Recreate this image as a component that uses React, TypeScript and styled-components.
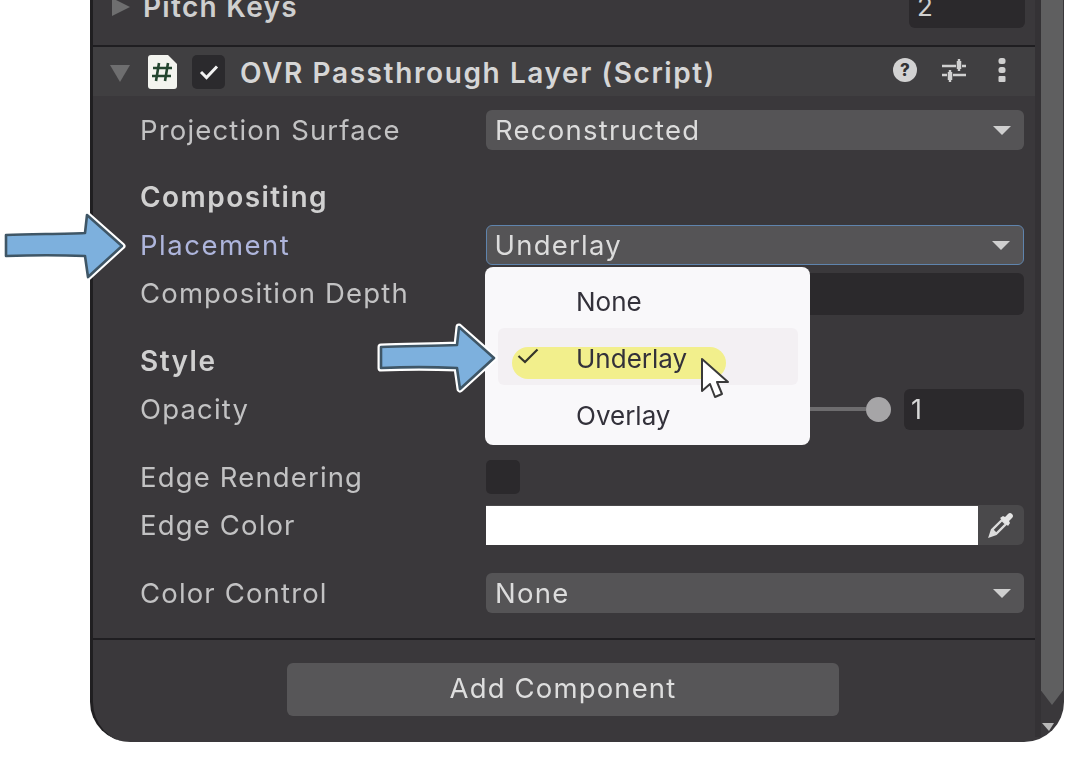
import React from 'react'
import styled, { createGlobalStyle } from 'styled-components'

const GlobalStyle = createGlobalStyle`
  html, body {
    margin: 0;
    height: 100%;
    background: #fff;
    overflow: hidden;
  }
  body {
    font-family: Inter, "Liberation Sans", sans-serif;
  }
`

const Panel = styled.div`
  position: relative;
  display: flex;
  box-sizing: border-box;
  width: 974px;
  height: 762px;
  margin: -20px 0 0 90px;
  background: #3a383b;
  border-left: 3px solid #201f21;
  border-radius: 0 0 40px 40px;
  filter: blur(0.4px);
`

const Content = styled.div`
  flex: 1;
  display: flex;
  flex-direction: column;
  min-width: 0;
`

const Scrollbar = styled.div`
  position: relative;
  align-self: flex-start;
  width: 29px;
  height: 757px;
  display: flex;
  border-left: 6px solid #343235;
  box-sizing: border-box;
`

const Thumb = styled.div`
  width: 22px;
  height: 725px;
  background: #5f5f60;
  clip-path: polygon(0 0, 100% 0, 100% 98%, 50% 100%, 0 98%);
`

const ScrollArrow = styled.div`
  position: absolute;
  left: 1px;
  top: 743px;
  width: 0;
  height: 0;
  border-left: 7px solid transparent;
  border-right: 5px solid transparent;
  border-top: 8px solid #b9b9b9;
`

const TopRow = styled.div`
  display: flex;
  align-items: center;
  height: 54px;
  padding: 0 10px 0 19px;
  margin-bottom: 11px;
`

const Caret = styled.div<{ $open?: boolean }>`
  width: 0;
  height: 0;
  ${(p) =>
    p.$open
      ? `margin-top: 3px;
         border-left: 10px solid transparent;
         border-right: 10px solid transparent;
         border-top: 17px solid #6e6e6f;`
      : `border-top: 9px solid transparent;
         border-bottom: 9px solid transparent;
         border-left: 18px solid #6e6e6f;`}
`

const PitchLabel = styled.span`
  margin-left: 13px;
  flex: 1;
  font-size: 28px;
  font-weight: 600;
  letter-spacing: 1.3px;
  color: #cfcfcf;
`

const PitchInput = styled.div`
  width: 116px;
  height: 42px;
  margin-top: -1px;
  box-sizing: border-box;
  padding-left: 8px;
  line-height: 42px;
  background: #2b292c;
  border-radius: 6px;
  font-size: 26px;
  color: #d0d0d0;
`

const Divider = styled.div`
  height: 2px;
  background: #1f1e21;
`

const Header = styled.div`
  display: flex;
  align-items: center;
  height: 49px;
  padding-left: 17px;
  background: #403f41;
`

const FileIcon = styled.svg`
  width: 30px;
  height: 36px;
  margin-left: 18px;
`

const Toggle = styled.div`
  display: flex;
  align-items: center;
  justify-content: center;
  width: 33px;
  height: 34px;
  margin-left: 14px;
  background: #2b2a2d;
  border-radius: 5px;
`

const HeaderTitle = styled.span`
  flex: 1;
  margin: 2px 0 0 15px;
  font-size: 28px;
  font-weight: 600;
  letter-spacing: 1.6px;
  color: #d6d6d6;
`

const HeaderIcons = styled.div`
  display: flex;
  align-items: center;
  gap: 24px;
  padding-right: 28px;
  margin-top: -4px;
`

const DotsIcon = styled.svg`
  margin-left: 6px;
`

const Body = styled.div`
  display: flex;
  flex-direction: column;
  gap: 28px;
  padding: 14px 11px 25px 47px;
`

const Group = styled.div<{ $nudge?: boolean }>`
  display: flex;
  flex-direction: column;
  gap: 8px;
  margin-top: ${(p) => (p.$nudge ? '1px' : '0')};
`

const Row = styled.div`
  display: grid;
  grid-template-columns: 346px 1fr;
  grid-template-rows: 40px;
  align-items: center;
  height: 40px;
`

const Label = styled.span<{ $focus?: boolean }>`
  font-size: 27.5px;
  letter-spacing: ${(p) => (p.$focus ? '1.5px' : '1.15px')};
  color: ${(p) => (p.$focus ? '#aeb5dc' : '#c2c2c3')};
`

const Heading = styled.div`
  height: 39px;
  line-height: 39px;
  font-size: 28px;
  font-weight: 600;
  letter-spacing: 1.45px;
  color: #d0d0d0;
`

const Select = styled.div<{ $focus?: boolean }>`
  display: flex;
  align-items: center;
  justify-content: space-between;
  box-sizing: border-box;
  height: 40px;
  padding: 0 13px 0 ${(p) => (p.$focus ? '7.5px' : '9px')};
  background: #555456;
  border-radius: 6px;
  border: ${(p) => (p.$focus ? '1.5px solid #5f84ad' : 'none')};
  font-size: 27.5px;
  letter-spacing: 1.25px;
  color: #dcdcdc;
`

const SelectCaret = styled.div`
  width: 0;
  height: 0;
  border-left: 9px solid transparent;
  border-right: 9px solid transparent;
  border-top: 9px solid #cfcfcf;
`

const DarkField = styled.div`
  align-self: start;
  height: 42px;
  background: #2b292c;
  border-radius: 6px;
`

const SliderControl = styled.div`
  display: flex;
  align-items: center;
`

const Track = styled.div`
  flex: 1;
  height: 4px;
  background: #6d6c6e;
`

const Knob = styled.div`
  width: 25px;
  height: 25px;
  border-radius: 50%;
  background: #a6a5a7;
  margin-right: 13px;
`

const NumberField = styled.div`
  width: 120px;
  height: 41px;
  box-sizing: border-box;
  padding-left: 7px;
  line-height: 41px;
  background: #2b292c;
  border-radius: 6px;
  font-size: 27px;
  color: #d8d8d8;
`

const CheckBox = styled.div`
  width: 34px;
  height: 34px;
  background: #2b292c;
  border-radius: 5px;
`

const ColorControl = styled.div`
  display: flex;
  align-items: flex-end;
  height: 40px;
  background: #4a494b;
  border-radius: 0 6px 6px 0;
`

const Swatch = styled.div`
  flex: 1;
  height: 39px;
  background: #fff;
`

const Picker = styled.div`
  display: flex;
  align-self: stretch;
  align-items: center;
  justify-content: center;
  width: 46px;
`

const Footer = styled.div`
  flex: 1;
  display: flex;
  justify-content: center;
  padding: 23px 2px 0 0;
`

const AddButton = styled.div`
  display: flex;
  align-items: center;
  justify-content: center;
  box-sizing: border-box;
  width: 552px;
  height: 53px;
  padding-bottom: 3px;
  background: #575658;
  border-radius: 6px;
  font-size: 27.5px;
  letter-spacing: 1.15px;
  color: #dedede;
`

const Menu = styled.div`
  position: absolute;
  left: 392px;
  top: 287px;
  width: 325px;
  height: 178px;
  box-sizing: border-box;
  padding-top: 6px;
  background: #f9f8fa;
  border-radius: 8px;
`

const MenuItem = styled.div<{ $active?: boolean }>`
  position: relative;
  display: flex;
  align-items: center;
  box-sizing: border-box;
  height: 57px;
  margin: ${(p) => (p.$active ? '-2px 12px 2px 13px' : '0 12px 0 13px')};
  padding: ${(p) => (p.$active ? '4px 0 0 78px' : '0 0 0 78px')};
  border-radius: 6px;
  background: ${(p) => (p.$active ? '#f3f0f3' : 'transparent')};
  font-size: 26px;
  color: #33313a;
`

const Highlight = styled.div`
  position: absolute;
  left: 14px;
  top: 19px;
  width: 214px;
  height: 32px;
  border-radius: 16px;
  background: #f2ef8c;
`

const MenuText = styled.span`
  position: relative;
`

const MenuCheck = styled.svg`
  position: absolute;
  left: 19px;
  top: 20px;
  width: 22px;
  height: 16px;
`

const MenuCursor = styled.svg`
  position: absolute;
  left: 202px;
  top: 29px;
  width: 30px;
  height: 44px;
`

const Callout = styled.svg<{ $x: number; $y: number }>`
  position: absolute;
  left: ${(p) => p.$x}px;
  top: ${(p) => p.$y}px;
  width: 126px;
  height: 76px;
  overflow: visible;
`

const BlueArrow = ({ x, y, tail }: { x: number; y: number; tail: number }) => {
  const d = `M${tail} 25 C30 24 60 24 83 23 L85 5 L120 36 L86 67 L83 46 C60 45 30 45 ${tail} 46 Z`
  return (
    <Callout $x={x} $y={y} viewBox="0 0 126 76">
      <path d={d} fill="none" stroke="#fff" strokeWidth="7" strokeLinejoin="round" />
      <path d={d} fill="#7db0dd" stroke="#3f5666" strokeWidth="2.6" strokeLinejoin="round" />
    </Callout>
  )
}

const Sliders = () => (
  <svg width="26" height="26" viewBox="0 0 26 26" fill="none" stroke="#d0d0d0" strokeWidth="2.4">
    <path d="M1 9h14M21 9h4M18 2v12" />
    <path d="M1 18h5M12 18h13M9 13v12" strokeWidth="2.4" />
    <path d="M18 4v8M9 15v8" strokeWidth="4.5" />
  </svg>
)

export default function App() {
  return (
    <>
      <GlobalStyle />
      <Panel>
        <Content>
          <TopRow>
            <Caret />
            <PitchLabel>Pitch Keys</PitchLabel>
            <PitchInput>2</PitchInput>
          </TopRow>
          <Divider />
          <Header>
            <Caret $open />
            <FileIcon viewBox="0 0 30 36">
              <path d="M3 1h17l9 9v22a3 3 0 0 1-3 3H3a3 3 0 0 1-3-3V4a3 3 0 0 1 3-3z" fill="#f3f4ef" />
              <path d="M11 9 8 27M20 9l-3 18M5 14h19M4 22h19" stroke="#23452f" strokeWidth="2.6" fill="none" />
            </FileIcon>
            <Toggle>
              <svg width="20" height="16" viewBox="0 0 20 16" fill="none">
                <path d="M2 8l5.5 5.5L18 2.5" stroke="#f2f2f2" strokeWidth="3" />
              </svg>
            </Toggle>
            <HeaderTitle>OVR Passthrough Layer (Script)</HeaderTitle>
            <HeaderIcons>
              <svg width="24" height="24" viewBox="0 0 24 24">
                <circle cx="12" cy="12" r="12" fill="#d2d2d2" />
                <text x="12" y="18" textAnchor="middle" fontFamily="Inter, sans-serif" fontSize="17" fontWeight="800" fill="#333">?</text>
              </svg>
              <Sliders />
              <DotsIcon width="10" height="24" viewBox="0 0 10 24" fill="#cfcfcf">
                <rect x="1.5" y="0" width="7" height="6" rx="2.5" />
                <rect x="1.5" y="9" width="7" height="6" rx="2.5" />
                <rect x="1.5" y="18" width="7" height="6" rx="1" />
              </DotsIcon>
            </HeaderIcons>
          </Header>
          <Body>
            <Group>
              <Row>
                <Label>Projection Surface</Label>
                <Select>
                  Reconstructed
                  <SelectCaret />
                </Select>
              </Row>
            </Group>
            <Group>
              <Heading>Compositing</Heading>
              <Row>
                <Label $focus>Placement</Label>
                <Select $focus>
                  Underlay
                  <SelectCaret />
                </Select>
              </Row>
              <Row>
                <Label>Composition Depth</Label>
                <DarkField />
              </Row>
            </Group>
            <Group $nudge>
              <Heading>Style</Heading>
              <Row>
                <Label>Opacity</Label>
                <SliderControl>
                  <Track />
                  <Knob />
                  <NumberField>1</NumberField>
                </SliderControl>
              </Row>
            </Group>
            <Group>
              <Row>
                <Label>Edge Rendering</Label>
                <CheckBox />
              </Row>
              <Row>
                <Label>Edge Color</Label>
                <ColorControl>
                  <Swatch />
                  <Picker>
                    <svg width="28" height="28" viewBox="0 0 28 28" fill="none">
                      <path d="M15 9 5 19l-2 6 6-2 10-10z" stroke="#dcdcdc" strokeWidth="2.4" />
                      <path d="M13 7l8 8 2-3-1-2 3-3a2.5 2.5 0 0 0-4-4l-3 3-2-1z" fill="#e4e4e4" />
                      <path d="M4 24l2-6 4 4z" fill="#dcdcdc" />
                    </svg>
                  </Picker>
                </ColorControl>
              </Row>
            </Group>
            <Group>
              <Row>
                <Label>Color Control</Label>
                <Select>
                  None
                  <SelectCaret />
                </Select>
              </Row>
            </Group>
          </Body>
          <Divider />
          <Footer>
            <AddButton>Add Component</AddButton>
          </Footer>
        </Content>
        <Scrollbar>
          <Thumb />
          <ScrollArrow />
        </Scrollbar>
        <Menu>
          <MenuItem>
            <MenuText>None</MenuText>
          </MenuItem>
          <MenuItem $active>
            <Highlight />
            <MenuCheck viewBox="0 0 22 16" fill="none">
              <path d="M1.5 8l6.5 6L20.5 1.5" stroke="#35352a" strokeWidth="2.2" />
            </MenuCheck>
            <MenuText>Underlay</MenuText>
            <MenuCursor viewBox="0 0 30 44">
              <path d="M2 2v32l8-7 5 13 7-3-5-12h11z" fill="#fff" stroke="#3a3a3a" strokeWidth="2" strokeLinejoin="round" />
            </MenuCursor>
          </MenuItem>
          <MenuItem>
            <MenuText>Overlay</MenuText>
          </MenuItem>
        </Menu>
        <BlueArrow x={-91} y={230} tail={4} />
        <BlueArrow x={281} y={342} tail={7} />
      </Panel>
    </>
  )
}
